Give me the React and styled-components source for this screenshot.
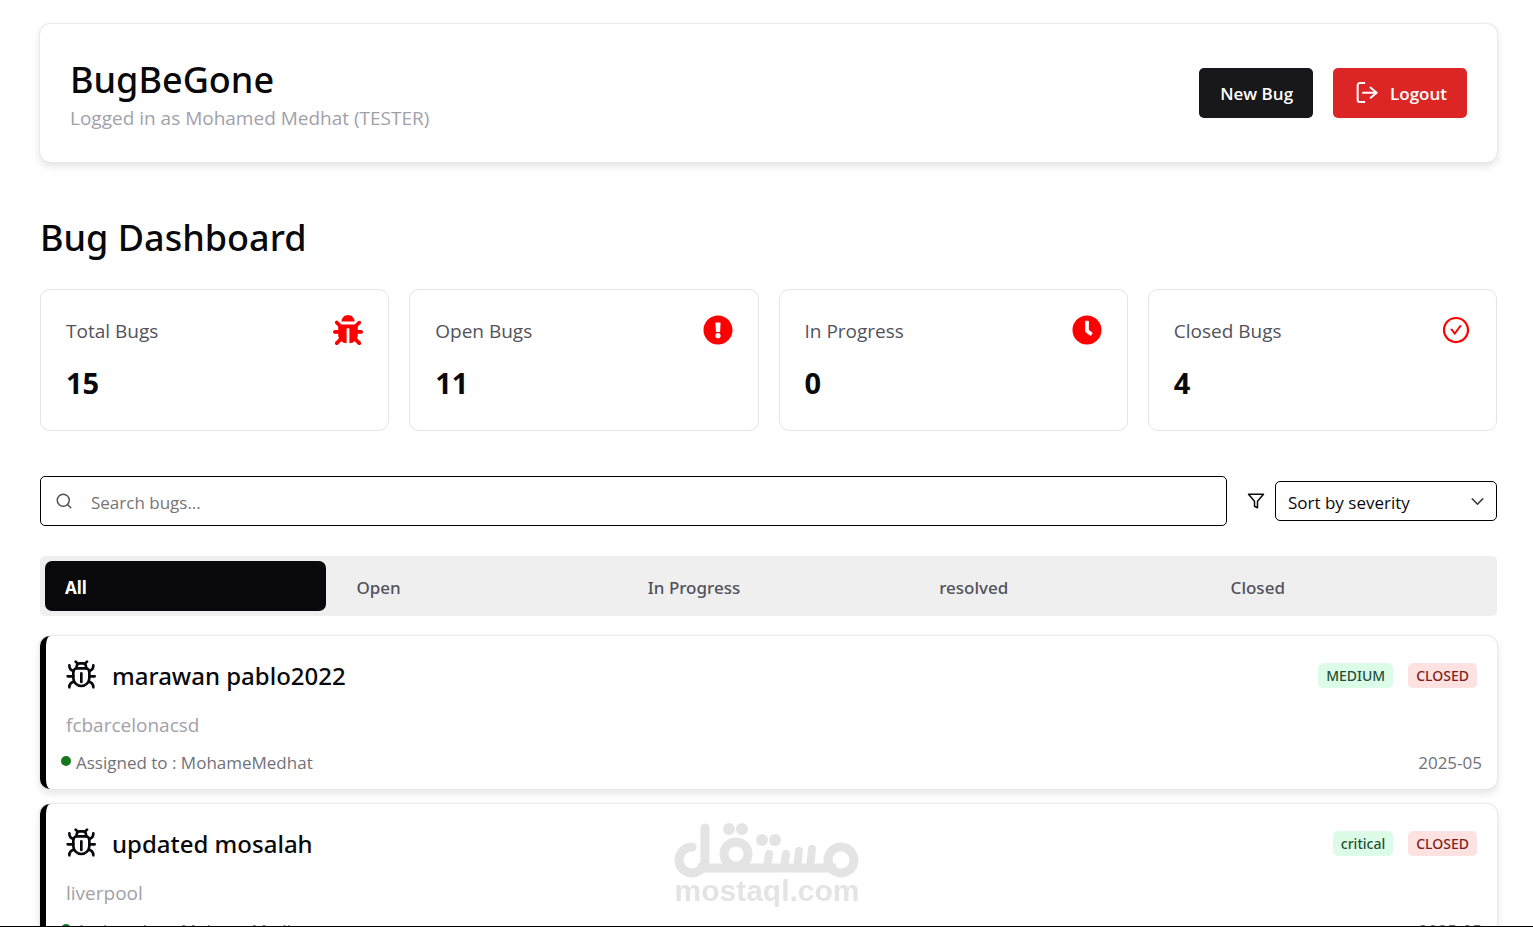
import React, { useState } from 'react'
import styled, { createGlobalStyle } from 'styled-components'
import { FaBug, FaExclamationCircle, FaClock } from 'react-icons/fa'
import { AiOutlineCheckCircle } from 'react-icons/ai'
import { FiSearch, FiFilter, FiChevronDown } from 'react-icons/fi'

const stats = [
  { label: 'Total Bugs', value: 15, icon: <FaBug /> },
  { label: 'Open Bugs', value: 11, icon: <FaExclamationCircle /> },
  { label: 'In Progress', value: 0, icon: <FaClock /> },
  { label: 'Closed Bugs', value: 4, icon: <AiOutlineCheckCircle /> },
]

const tabs = ['All', 'Open', 'In Progress', 'resolved', 'Closed']

const bugs = [
  { id: 1, title: 'marawan pablo2022', text: 'fcbarcelonacsd', severity: 'MEDIUM', status: 'CLOSED', assigned: 'MohameMedhat', date: '2025-05' },
  { id: 2, title: 'updated mosalah', text: 'liverpool', severity: 'critical', status: 'CLOSED', assigned: 'MohameMedhat', date: '2025-05' },
]

const LogoutIcon = () => (
  <LineIcon viewBox="0 0 78 78" $size={26} $stroke={6} aria-hidden="true">
    <path d="M31 9H17a6 6 0 0 0-6 6V60a6 6 0 0 0 6 6H31" />
    <path d="M27 38H68M50 23L68 38L50 53" />
  </LineIcon>
)

const BugIcon = () => (
  <LineIcon viewBox="0 0 90 90" $size={30} $stroke={8} aria-hidden="true">
    <path d="M29 5L34 10M63 5L58 10" />
    <path d="M32 24V19a9 9 0 0 1 9-9H51a9 9 0 0 1 9 9V24" />
    <path d="M33 25H59a11 11 0 0 1 11 11V54a24 24 0 0 1-48 0V36a11 11 0 0 1 11-11z" />
    <path d="M46 40V66" />
    <path d="M10 16C10 26 14 31 22 33M82 16C82 26 78 31 70 33" />
    <path d="M5 49H22M70 49H86" />
    <path d="M10 82C10 73 15 67 24 65M82 82C82 73 77 67 68 65" />
  </LineIcon>
)

const Watermark = () => (
  <WatermarkSvg viewBox="0 0 186 86" aria-hidden="true">
    <g fill="none" stroke="#e4e4e5" strokeWidth="9" strokeLinecap="round">
      <path d="M18 24a13 13 0 1 0 13 13V5" />
      <path d="M24 45H162" strokeLinecap="butt" />
      <circle cx="62" cy="31" r="12" />
      <path d="M95 31L93 44M112 31L110 44M125 28L123 44M138 26L136 44" strokeWidth="8" />
      <circle cx="167" cy="37" r="13" />
    </g>
    <g fill="#e4e4e5">
      <circle cx="55" cy="6" r="6" />
      <circle cx="68" cy="6" r="6" />
      <circle cx="88" cy="17" r="6" />
      <circle cx="101" cy="17" r="6" />
      <text x="93" y="78" textAnchor="middle">mostaql.com</text>
    </g>
  </WatermarkSvg>
)

const App = () => {
  const [ activeTab, setActiveTab ] = useState('All')
  const [ search, setSearch ] = useState('')

  return (
    <Screen>
      <GlobalStyle />
      <Header>
        <div>
          <Brand>BugBeGone</Brand>
          <LoggedIn>Logged in as Mohamed Medhat (TESTER)</LoggedIn>
        </div>
        <Actions>
          <Button>New Bug</Button>
          <Button $danger>
            <LogoutIcon />
            Logout
          </Button>
        </Actions>
      </Header>

      <PageTitle>Bug Dashboard</PageTitle>

      <Stats>
        {stats.map(stat => (
          <StatCard key={stat.label}>
            <StatTop>
              <StatLabel>{stat.label}</StatLabel>
              {stat.icon}
            </StatTop>
            <StatValue>{stat.value}</StatValue>
          </StatCard>
        ))}
      </Stats>

      <Filters>
        <SearchBox>
          <FiSearch />
          <SearchInput
            aria-label="Search bugs"
            placeholder="Search bugs..."
            value={search}
            onChange={e => setSearch(e.target.value)}
          />
        </SearchBox>
        <SortBox>
          <FiFilter size={18} />
          <SelectWrap>
            <Select aria-label="Sort bugs">
              <option>Sort by severity</option>
              <option>Sort by date</option>
            </Select>
            <FiChevronDown />
          </SelectWrap>
        </SortBox>
      </Filters>

      <Tabs>
        {tabs.map(tab => (
          <Tab key={tab} $active={tab === activeTab} onClick={() => setActiveTab(tab)}>
            {tab}
          </Tab>
        ))}
      </Tabs>

      <BugList>
        {bugs.map(bug => (
          <BugCard key={bug.id}>
            <BugTop>
              <BugName>
                <BugIcon />
                <BugTitle>{bug.title}</BugTitle>
              </BugName>
              <Badges>
                <Badge>{bug.severity}</Badge>
                <Badge $closed>{bug.status}</Badge>
              </Badges>
            </BugTop>
            <BugText>{bug.text}</BugText>
            <BugBottom>
              <Assigned>
                <Dot />
                Assigned to : {bug.assigned}
              </Assigned>
              <span>{bug.date}</span>
            </BugBottom>
          </BugCard>
        ))}
      </BugList>

      <Watermark />
    </Screen>
  )
}

export default App

const GlobalStyle = createGlobalStyle`
  * {
    box-sizing: border-box;
    margin: 0;
  }
  body {
    background: #fff;
    color: #09090b;
    font-family: 'Segoe UI', 'Open Sans', 'Noto Sans', sans-serif;
  }
  button, input, select {
    font-family: inherit;
  }
`
const LineIcon = styled.svg`
  flex: none;
  width: ${({ $size }) => $size}px;
  height: ${({ $size }) => $size}px;
  fill: none;
  stroke: currentColor;
  stroke-width: ${({ $stroke }) => $stroke};
  stroke-linecap: round;
  stroke-linejoin: round;
`
const Screen = styled.main`
  height: 100vh;
  overflow: hidden;
  padding: 24px 36px 0 40px;
  border-bottom: 1px solid #000;
`
const Header = styled.header`
  display: flex;
  justify-content: space-between;
  align-items: center;
  padding: 32px 30px;
  border-radius: 10px;
  box-shadow: 0 0 1px 1px #e9e9eb, 0 4px 8px rgba(0, 0, 0, 0.12);
`
const Brand = styled.h1`
  font-family: 'Segoe UI', 'Noto Sans', sans-serif;
  font-size: 36px;
  line-height: 48px;
  font-weight: 500;
`
const LoggedIn = styled.p`
  padding-top: 2px;
  font-size: 19px;
  line-height: 24px;
  color: #a1a1aa;
`
const Actions = styled.div`
  display: flex;
  gap: 20px;
`
const Button = styled.button`
  display: flex;
  align-items: center;
  gap: 10px;
  height: 50px;
  padding: 0 20px 0 21px;
  border: none;
  border-radius: 5px;
  background: ${({ $danger }) => ($danger ? '#dc2626' : '#18181b')};
  color: #fff;
  font-size: 17px;
  font-weight: 600;
  cursor: pointer;
`
const PageTitle = styled.h2`
  margin-top: 52px;
  font-family: 'Segoe UI', 'Noto Sans', sans-serif;
  font-size: 36px;
  line-height: 48px;
  font-weight: 500;
`
const Stats = styled.section`
  display: grid;
  grid-template-columns: repeat(4, 1fr);
  gap: 20px;
  margin-top: 27px;
`
const StatCard = styled.div`
  height: 142px;
  padding: 25px;
  border: 1px solid #e4e4e7;
  border-radius: 10px;
`
const StatTop = styled.div`
  display: flex;
  justify-content: space-between;
  align-items: center;
  height: 30px;

  svg {
    font-size: 30px;
    color: #f00;
  }
`
const StatLabel = styled.span`
  padding-top: 2px;
  font-size: 19px;
  color: #52525b;
`
const StatValue = styled.p`
  margin-top: 18px;
  font-size: 29px;
  line-height: 40px;
  font-weight: 700;
`
const Filters = styled.div`
  display: flex;
  align-items: center;
  gap: 20px;
  margin-top: 45px;
`
const SearchBox = styled.label`
  flex: 1;
  display: flex;
  align-items: center;
  height: 50px;
  padding: 0 14px;
  border: 1px solid #000;
  border-radius: 5px;

  svg {
    font-size: 18px;
    color: #52525b;
  }
`
const SearchInput = styled.input`
  flex: 1;
  margin-left: 18px;
  padding: 2px 0 0;
  border: none;
  outline: none;
  font-size: 17px;

  &::placeholder {
    color: #757575;
  }
`
const SortBox = styled.div`
  display: flex;
  align-items: center;
  gap: 10px;
`
const SelectWrap = styled.div`
  position: relative;

  svg {
    position: absolute;
    top: 10px;
    right: 9px;
    font-size: 21px;
    stroke-width: 1.7;
    color: #3f3f46;
    pointer-events: none;
  }
`
const Select = styled.select`
  appearance: none;
  width: 222px;
  height: 40px;
  padding: 2px 12px 0;
  border: 1px solid #000;
  border-radius: 5px;
  background: #fff;
  color: #09090b;
  font-size: 17px;
`
const Tabs = styled.nav`
  display: grid;
  grid-template-columns: repeat(5, 1fr);
  gap: 10px;
  margin-top: 30px;
  padding: 5px;
  border-radius: 5px;
  background: #efefef;
`
const Tab = styled.button`
  height: 50px;
  padding: 3px 20px 0;
  border: none;
  border-radius: 7px;
  background: ${({ $active }) => ($active ? '#09090b' : 'transparent')};
  color: ${({ $active }) => ($active ? '#fff' : '#52525b')};
  font-family: 'Segoe UI', 'Noto Sans', sans-serif;
  font-size: 17px;
  font-weight: ${({ $active }) => ($active ? 700 : 500)};
  text-align: left;
  cursor: pointer;
`
const BugList = styled.section`
  display: flex;
  flex-direction: column;
  gap: 15px;
  margin-top: 20px;
`
const BugCard = styled.article`
  padding: 20px 15px 11px;
  border-left: 6px solid #000;
  border-radius: 10px;
  box-shadow: 0 0 1px 1px #e9e9eb, 0 4px 8px rgba(0, 0, 0, 0.12);
`
const BugTop = styled.div`
  display: flex;
  justify-content: space-between;
  align-items: center;
  height: 38px;
  padding: 0 5px;
`
const BugName = styled.div`
  display: flex;
  align-items: center;
  gap: 16px;
`
const BugTitle = styled.h3`
  padding-top: 2px;
  font-family: 'Segoe UI', 'Noto Sans', sans-serif;
  font-size: 24px;
  line-height: 36px;
  font-weight: 500;
`
const Badges = styled.div`
  display: flex;
  gap: 15px;
`
const Badge = styled.span`
  padding: 0 8px;
  border-radius: 5px;
  background: ${({ $closed }) => ($closed ? '#fee2e2' : '#dcfce7')};
  color: ${({ $closed }) => ($closed ? '#7f1d1d' : '#1f5136')};
  font-family: 'Segoe UI', 'Noto Sans', sans-serif;
  font-size: 14px;
  line-height: 25px;
  font-weight: 500;
`
const BugText = styled.p`
  padding: 0 5px;
  margin-top: 16px;
  font-size: 19px;
  line-height: 30px;
  color: #a1a1aa;
`
const BugBottom = styled.div`
  display: flex;
  justify-content: space-between;
  margin-top: 8px;
  font-size: 17px;
  line-height: 30px;
  color: #71717a;
`
const Assigned = styled.span`
  display: flex;
  align-items: center;
  gap: 5px;
`
const Dot = styled.span`
  width: 10px;
  height: 10px;
  margin-bottom: 4px;
  border-radius: 50%;
  background: #15771f;
`
const WatermarkSvg = styled.svg`
  position: fixed;
  left: 50%;
  bottom: 18px;
  width: 186px;
  height: 86px;
  transform: translateX(-50%);

  text {
    font-family: 'Liberation Sans', sans-serif;
    font-size: 30px;
    font-weight: 700;
  }
`
